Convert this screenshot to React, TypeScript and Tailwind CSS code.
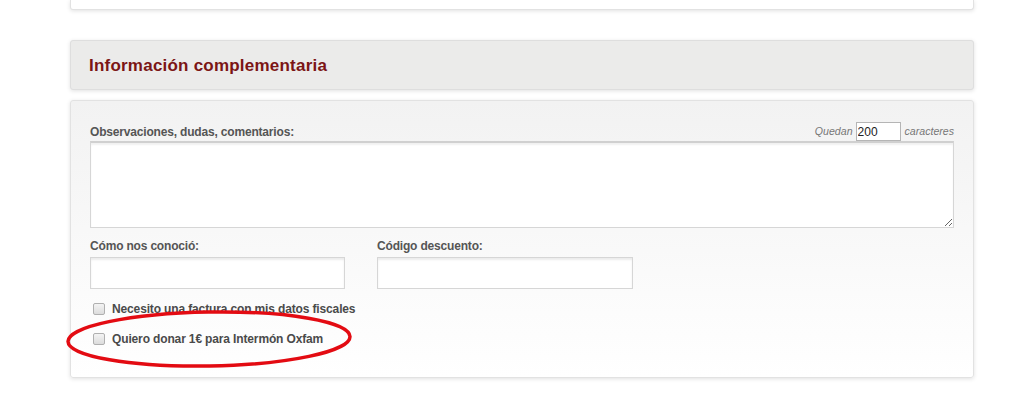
import React from "react";

export default function App() {
  return (
    <div
      className="w-[1024px] h-[397px] bg-white overflow-hidden relative"
      style={{ fontFamily: '"Liberation Sans", Arial, sans-serif' }}
    >
      <div className="ml-[70px] w-[904px] flex flex-col">
        <div className="h-[10px] bg-white rounded-b-[3px] border border-t-0 border-[#e2e2e2] shadow-[0_1px_4px_rgba(0,0,0,0.12)]" />
        <div className="mt-[30px] h-[50px] bg-[#ebebea] rounded-[3px] border border-[#dedede] shadow-[0_1px_4px_rgba(0,0,0,0.12)] flex items-center pl-[18px] pt-[1px]">
          <h2 className="text-[17px] font-bold text-[#7b1515] tracking-[0.22px]">
            Información complementaria
          </h2>
        </div>
        <div className="mt-[10px] h-[278px] rounded-[3px] border border-[#e2e2e2] bg-gradient-to-b from-[#f2f2f2] to-[#ffffff] shadow-[0_1px_4px_rgba(0,0,0,0.12)] px-[19px] pt-[21px]">
          <div className="flex items-end justify-between h-[19px]">
            <span className="text-[12px] font-bold text-[#555] leading-[14px] mb-[2px] tracking-[-0.18px]">
              Observaciones, dudas, comentarios:
            </span>
            <div className="flex items-center text-[10.6px] italic text-[#777]">
              <span>Quedan</span>
              <input
                readOnly
                value="200"
                className="ml-[3px] w-[45px] h-[19px] border border-[#b5b5b5] bg-white text-[12px] not-italic text-[#222] px-[1px] outline-none"
              />
              <span className="ml-[4px]">caracteres</span>
            </div>
          </div>
          <textarea className="block w-[864px] h-[87px] border border-[#d6d6d6] border-t-2 border-t-[#d0d0d0] shadow-[inset_0_2px_2px_rgba(0,0,0,0.06)] bg-white outline-none resize" />
          <div className="flex gap-[32px] mt-[11px]">
            <div className="flex flex-col w-[255px]">
              <span className="text-[12px] font-bold text-[#555] leading-[14px] tracking-[-0.18px]">
                Cómo nos conoció:
              </span>
              <input className="mt-[4px] h-[32px] border border-[#d6d6d6] shadow-[inset_0_2px_2px_rgba(0,0,0,0.08)] bg-white outline-none" />
            </div>
            <div className="flex flex-col w-[256px]">
              <span className="text-[12px] font-bold text-[#555] leading-[14px] tracking-[-0.18px]">
                Código descuento:
              </span>
              <input className="mt-[4px] h-[32px] border border-[#d6d6d6] shadow-[inset_0_2px_2px_rgba(0,0,0,0.08)] bg-white outline-none" />
            </div>
          </div>
          <div className="flex flex-col gap-[16px] mt-[13px] pl-[3px]">
            <label className="flex items-center gap-[7px] h-[14px]">
              <span className="w-[12px] h-[12px] rounded-[2px] border border-[#b0b0b0] bg-gradient-to-b from-[#f4f4f4] to-[#dcdcdc]" />
              <span className="text-[12px] font-bold text-[#4a4a4a] tracking-[-0.14px]">
                Necesito una factura con mis datos fiscales
              </span>
            </label>
            <label className="flex items-center gap-[7px] h-[14px]">
              <span className="w-[12px] h-[12px] rounded-[2px] border border-[#b0b0b0] bg-gradient-to-b from-[#f4f4f4] to-[#dcdcdc]" />
              <span className="text-[12px] font-bold text-[#4a4a4a] tracking-[-0.14px]">
                Quiero donar 1€ para Intermón Oxfam
              </span>
            </label>
          </div>
        </div>
      </div>
      <svg
        className="absolute left-[60px] top-[305px] pointer-events-none"
        width="300"
        height="70"
        viewBox="0 0 300 70"
      >
        <ellipse
          cx="149"
          cy="34"
          rx="141"
          ry="27"
          fill="none"
          stroke="#e30b12"
          strokeWidth="3.5"
          transform="rotate(-1 149 34)"
        />
      </svg>
    </div>
  );
}
